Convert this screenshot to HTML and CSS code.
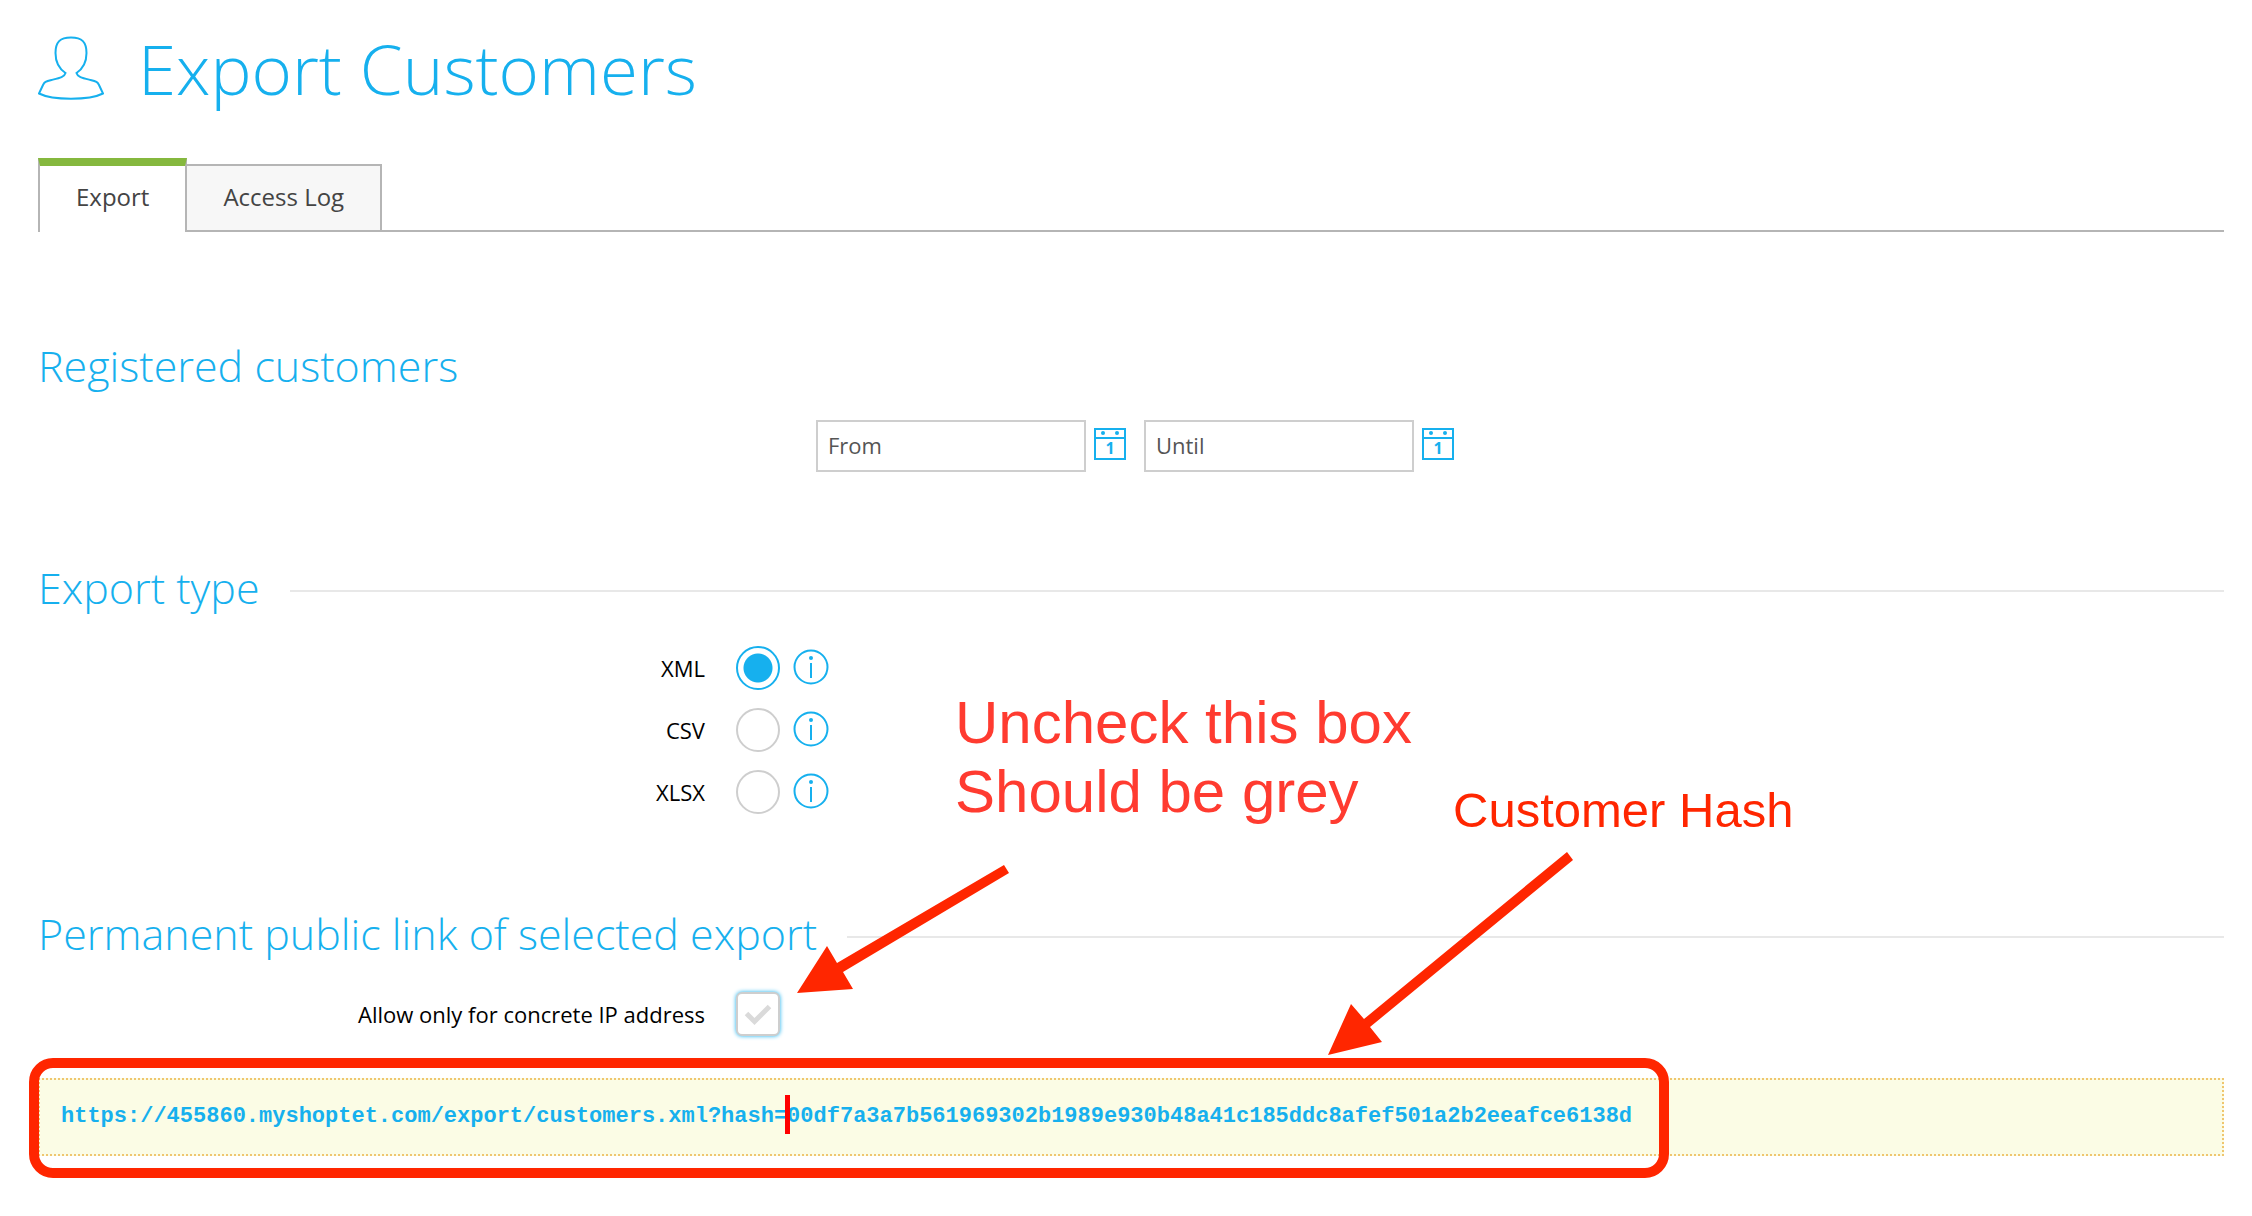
FILE: index.html
```html
<!DOCTYPE html>
<html lang="en">
<head>
<meta charset="UTF-8">
<meta name="viewport" content="width=device-width, initial-scale=1.0">
<title>Export Customers</title>
<link rel="stylesheet" href="styles.css">
</head>
<body>
<header class="page-header">
  <svg class="user-icon" viewBox="0 0 66 64" aria-hidden="true">
    <path d="M33 1.500C22 1.500 17.500 6 17.500 17c0 9 4 16 10 20-1 4-6 5-14 7-6 1.500-7 2-8.500 5L1 57.500C8 61 20 62.800 33 62.800S58 61 65 57.500L61 49c-1.500-3-2.500-3.500-8.500-5-8-2-13-3-14-7 6-4 10-11 10-20C48.500 6 44 1.500 33 1.500z"/>
  </svg>
  <h1>Export Customers</h1>
</header>

<nav class="tabs">
  <a href="#export" class="tab active">Export</a>
  <a href="#log" class="tab">Access Log</a>
</nav>

<form class="content">
  <section class="customers">
    <h2>Registered customers</h2>
    <div class="dates">
      <input type="text" class="date" placeholder="From" aria-label="From">
      <button type="button" class="calendar" aria-label="Pick from date"><svg viewBox="0 0 32 32"><path d="M1 1h30v30H1zM1 10h30"/><circle cx="9" cy="5" r="2"/><circle cx="23" cy="5" r="2"/></svg><span>1</span></button>
      <input type="text" class="date" placeholder="Until" aria-label="Until">
      <button type="button" class="calendar" aria-label="Pick until date"><svg viewBox="0 0 32 32"><path d="M1 1h30v30H1zM1 10h30"/><circle cx="9" cy="5" r="2"/><circle cx="23" cy="5" r="2"/></svg><span>1</span></button>
    </div>
  </section>

  <section class="type">
    <h2 class="ruled">Export type</h2>
    <div class="row">
      <label for="xml">XML</label>
      <input type="radio" name="type" id="xml" checked>
      <svg class="info" viewBox="0 0 36 36"><circle cx="18" cy="18" r="16.500"/><path d="M18 14v15"/><circle class="dot" cx="18" cy="9" r="2"/></svg>
    </div>
    <div class="row">
      <label for="csv">CSV</label>
      <input type="radio" name="type" id="csv">
      <svg class="info" viewBox="0 0 36 36"><circle cx="18" cy="18" r="16.500"/><path d="M18 14v15"/><circle class="dot" cx="18" cy="9" r="2"/></svg>
    </div>
    <div class="row">
      <label for="xlsx">XLSX</label>
      <input type="radio" name="type" id="xlsx">
      <svg class="info" viewBox="0 0 36 36"><circle cx="18" cy="18" r="16.500"/><path d="M18 14v15"/><circle class="dot" cx="18" cy="9" r="2"/></svg>
    </div>
  </section>

  <section class="link">
    <h2 class="ruled">Permanent public link of selected export</h2>
    <div class="row">
      <label for="ip">Allow only for concrete IP address</label>
      <span class="check">
        <input type="checkbox" id="ip">
        <svg viewBox="0 0 28 22"><path d="M2.500 9.500l8 8L25.500 2.500"/></svg>
      </span>
    </div>
    <div class="url-box">
      <a href="#">https://455860.myshoptet.com/export/customers.xml?hash=00df7a3a7b561969302b1989e930b48a41c185ddc8afef501a2b2eeafce6138d</a>
      <span class="frame"></span>
      <span class="caret"></span>
    </div>
  </section>
</form>

<!-- notes drawn over the page -->
<p class="note note-check">Uncheck this box<br>Should be grey</p>
<p class="note note-hash">Customer Hash</p>
<svg class="arrows" width="800" height="220" viewBox="790 845 800 220" aria-hidden="true">
  <path d="M797 993l30-47 10 17 167-98 5 8-166 99 10 17z"/>
  <path d="M1328 1055l23-51 13 15 203-167 6 8-203 167 12 15z"/>
</svg>
</body>
</html>
```
FILE: styles.css
```css
* {
  box-sizing: border-box;
}
body {
  position: relative;
  margin: 0;
  padding: 18px 28px 60px 38px;
  background-color: #fff;
  color: #000;
  font-family: "Open Sans", sans-serif;
  font-size: 22px;
  line-height: 30px;
}
h1, h2 {
  margin: 0;
  font-weight: 300;
  color: #16b0ee;
}
h1 {
  font-size: 69px;
  line-height: 100px;
}
h2 {
  font-size: 43px;
  line-height: 60px;
}
.page-header {
  display: flex;
  align-items: center;
  gap: 34px;
}
.user-icon {
  width: 66px;
  height: 64px;
  fill: none;
  stroke: #16b0ee;
  stroke-width: 2;
}

/* tabs */
.tabs {
  display: flex;
  align-items: flex-end;
  margin-top: 40px;
}
.tabs::after {
  content: "";
  flex: 1;
  border-bottom: 2px solid #b5b5b5;
}
.tab {
  height: 68px;
  padding: 14px 36px 0;
  border: 2px solid #b5b5b5;
  border-left: 0;
  background-color: #f7f7f7;
  color: #444;
  font-size: 24px;
  line-height: 34px;
  text-decoration: none;
}
.tab.active {
  height: 74px;
  border-left: 2px solid #b5b5b5;
  border-top: 8px solid #85b83e;
  border-bottom: 0;
  background-color: #fff;
}

/* sections */
.customers {
  padding-top: 104px;
}
.dates {
  display: flex;
  align-items: center;
  justify-content: center;
  gap: 8px;
  margin-top: 24px;
  padding-left: 8px;
}
.date {
  width: 270px;
  height: 52px;
  padding: 0 10px 2px;
  border: 2px solid #cecece;
  font: inherit;
  color: #555;
}
.date::placeholder {
  color: #555;
  opacity: 1;
}
.calendar {
  position: relative;
  width: 32px;
  height: 32px;
  margin: 0 10px 4px 0;
  padding: 0;
  border: 0;
  background: none;
  color: #16b0ee;
}
.calendar:last-child {
  margin-right: 0;
}
.calendar svg {
  display: block;
  fill: none;
  stroke: currentColor;
  stroke-width: 2;
}
.calendar circle {
  fill: currentColor;
  stroke: none;
}
.calendar span {
  position: absolute;
  left: 0;
  right: 0;
  top: 10px;
  font: bold 16px/20px "Open Sans", sans-serif;
}
.ruled {
  display: flex;
  align-items: center;
  gap: 30px;
}
.ruled::after {
  content: "";
  flex: 1;
  height: 2px;
  margin-top: 6px;
  background-color: #e8e8e8;
}
.type {
  padding-top: 86px;
}
.row {
  display: flex;
  align-items: center;
  height: 44px;
  margin-top: 18px;
}
.ruled + .row {
  margin-top: 28px;
}
.row label {
  width: 667px;
  margin-right: 31px;
  text-align: right;
}
.row input {
  appearance: none;
  width: 44px;
  height: 44px;
  margin: 0;
  border: 2px solid #cecece;
  background-color: #fff;
}
.row input[type="radio"] {
  border-radius: 50%;
}
.row input[type="radio"]:checked {
  border-color: #16b0ee;
  background: radial-gradient(circle, #16b0ee 14px, #fff 15px);
}
.info {
  width: 36px;
  height: 36px;
  margin: 0 0 2px 13px;
  fill: none;
  stroke: #16b0ee;
  stroke-width: 2;
}
.info .dot {
  fill: #16b0ee;
  stroke: none;
}
.link {
  padding-top: 90px;
}
.check {
  position: relative;
  height: 44px;
}
.row .check input {
  border-radius: 6px;
  box-shadow: 0 0 4px #16b0ee;
}
.check svg {
  position: absolute;
  left: 8px;
  top: 12px;
  width: 28px;
  height: 22px;
  fill: none;
  stroke: #dadada;
  stroke-width: 5;
  pointer-events: none;
}

/* link box */
.url-box {
  position: relative;
  margin-top: 42px;
  padding: 22px 21px;
  border: 2px dotted #efc66f;
  background-color: #fbfce5;
}
.url-box a {
  display: block;
  color: #16b0ee;
  font: bold 22px/30px "Liberation Mono", monospace;
  text-decoration: none;
}
.frame {
  position: absolute;
  left: -11px;
  top: -22px;
  width: 1640px;
  height: 120px;
  border: 10px solid #ff2600;
  border-radius: 24px;
}
.caret {
  position: absolute;
  left: 745px;
  top: 15px;
  width: 5px;
  height: 39px;
  background-color: #f00;
}

/* notes */
.note {
  position: absolute;
  margin: 0;
  font-family: "Liberation Sans", Arial, sans-serif;
  white-space: nowrap;
}
.note-check {
  left: 955px;
  top: 688px;
  color: #ff3b30;
  font-size: 60px;
  line-height: 69px;
}
.note-hash {
  left: 1453px;
  top: 782px;
  color: #ff2600;
  font-size: 49px;
  line-height: 56px;
}
.arrows {
  position: absolute;
  left: 790px;
  top: 845px;
  fill: #ff2600;
}
```
